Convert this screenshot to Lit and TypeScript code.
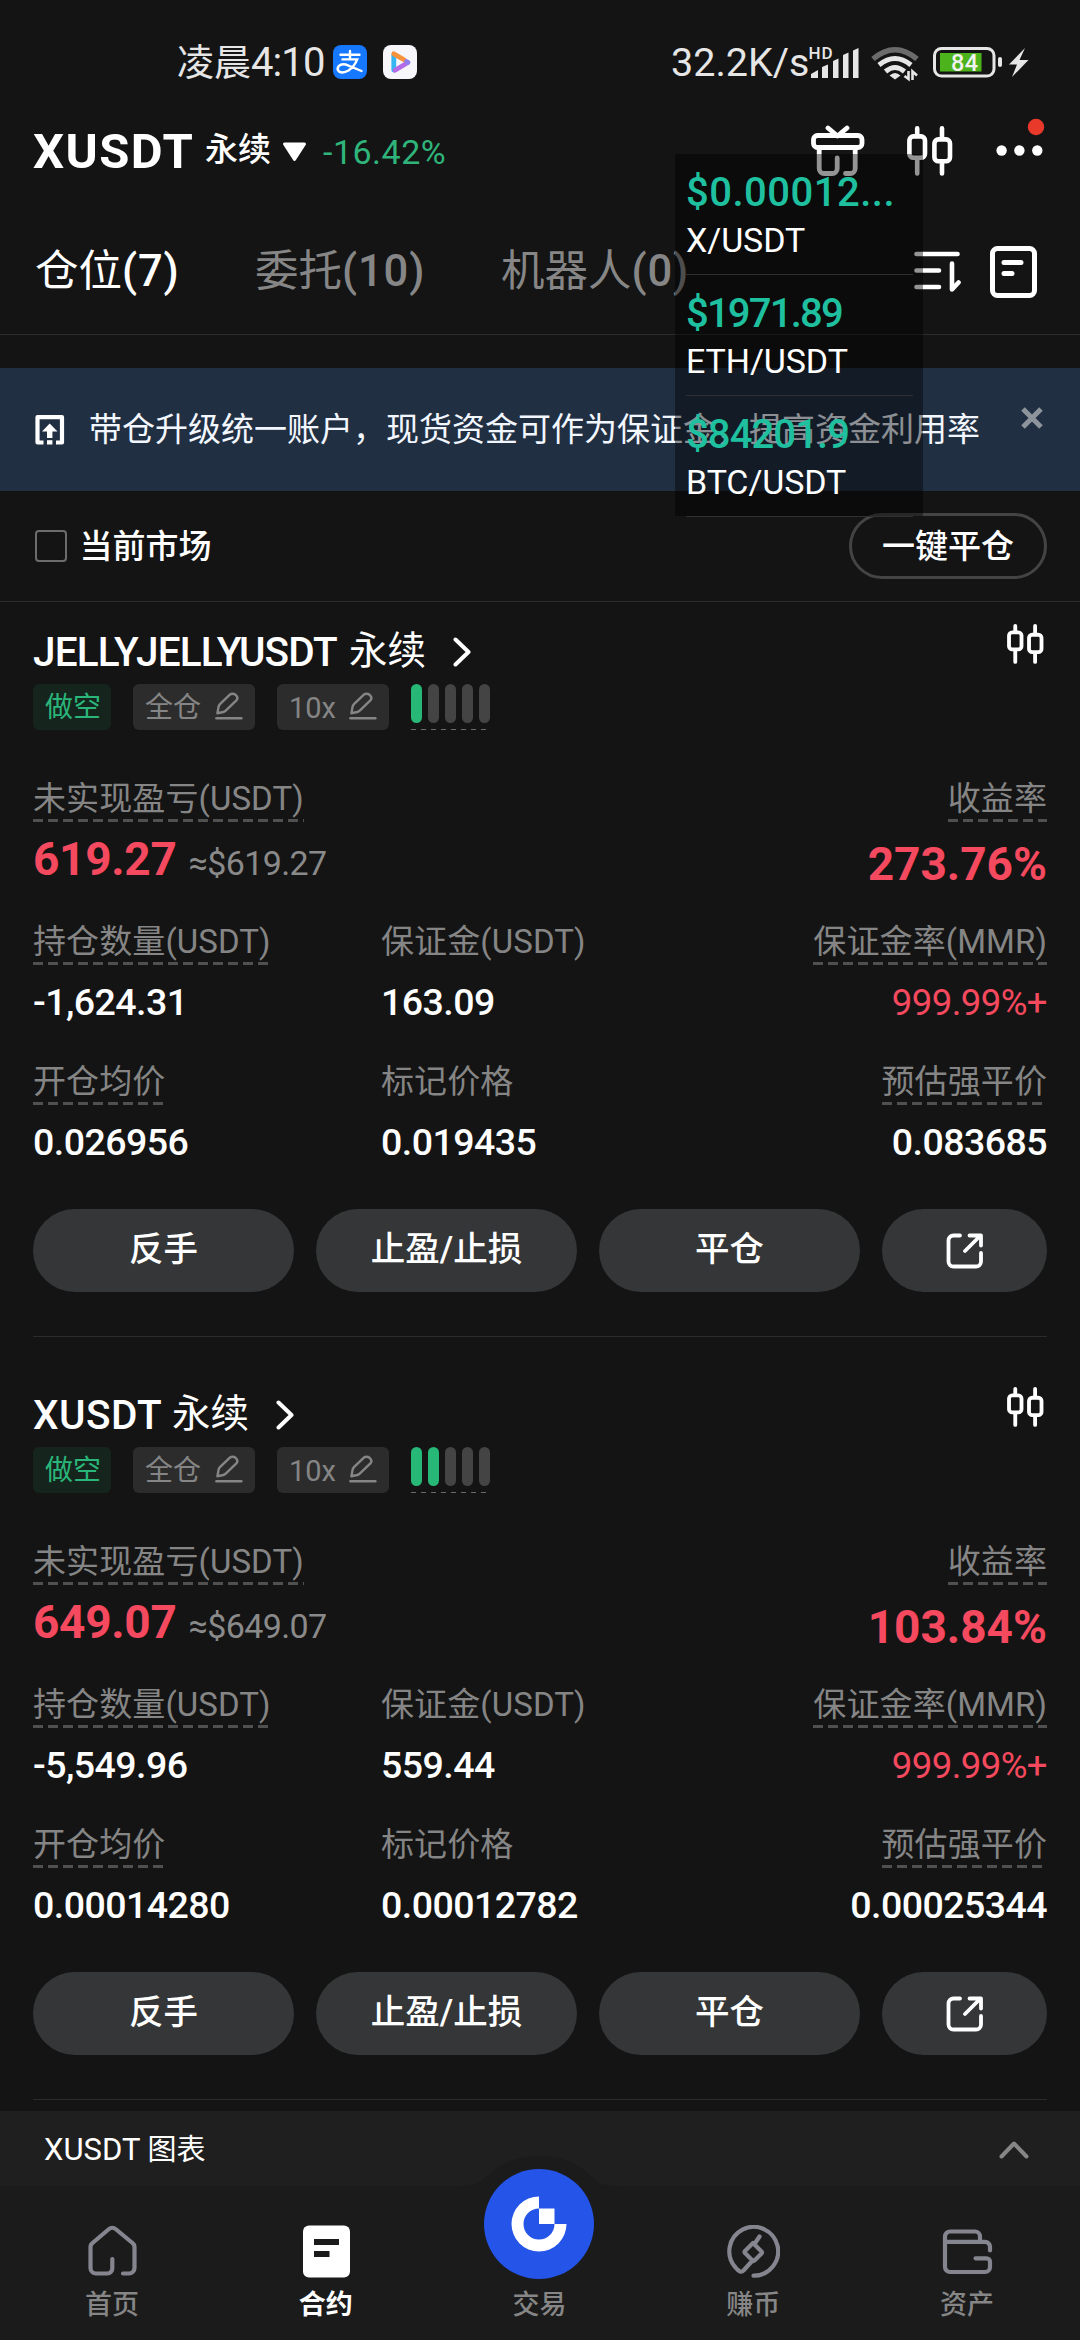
import { LitElement, html, svg, css } from "lit";
import { customElement, property } from "lit/decorators.js";

interface Position {
  symbol: string;
  symbolClass: string;
  risk: number;
  pnl: string;
  roi: string;
  size: string;
  margin: string;
  entry: string;
  mark: string;
  liquidation: string;
}

const POSITIONS: Position[] = [
  {
    symbol: "JELLYJELLYUSDT",
    symbolClass: "long",
    risk: 1,
    pnl: "619.27",
    roi: "273.76%",
    size: "-1,624.31",
    margin: "163.09",
    entry: "0.026956",
    mark: "0.019435",
    liquidation: "0.083685",
  },
  {
    symbol: "XUSDT",
    symbolClass: "short",
    risk: 2,
    pnl: "649.07",
    roi: "103.84%",
    size: "-5,549.96",
    margin: "559.44",
    entry: "0.00014280",
    mark: "0.00012782",
    liquidation: "0.00025344",
  },
];

const QUOTES = [
  { price: "$0.00012...", pair: "X/USDT", cls: "wide" },
  { price: "$1971.89", pair: "ETH/USDT", cls: "tight" },
  { price: "$84201.9", pair: "BTC/USDT", cls: "snug" },
];

const candles = (w: number, h: number, sw: number) => html`
  <svg width=${w} height=${h} viewBox="0 0 46 50" fill="none" stroke="#fff" stroke-width=${sw} stroke-linecap="round">
    <rect x="2.4" y="10.4" width="15.6" height="21.4" rx="4" />
    <path d="M10.2 2.4V9M10.2 33V47.4" />
    <rect x="27.4" y="13.4" width="15.6" height="21.8" rx="4" />
    <path d="M35 2.4V12M35 36V47.4" />
  </svg>
`;

const pencil = html`
  <svg width="28" height="28" viewBox="0 0 28 28" fill="none" stroke="#858585" stroke-width="2.4" stroke-linecap="round" stroke-linejoin="round">
    <path d="M2.4 21.2L3.6 14.6Q4 13 5.2 11.8L14.6 2.8Q17.6 .6 20.6 2.8Q23.8 5.6 21.4 8.4L11 18.4Q9.8 19.6 8.2 20Z" />
    <path d="M1.4 26.3H26.4" />
  </svg>
`;

const base = css`
  :host {
    display: block;
    font-family: Roboto, "Noto Sans CJK SC", sans-serif;
  }
  * {
    box-sizing: border-box;
  }
  svg {
    display: block;
    flex: none;
  }
`;

@customElement("status-bar")
class StatusBar extends LitElement {
  static styles = [
    base,
    css`
      .bar {
        height: 124px;
        display: flex;
        align-items: center;
        color: #e6e6e6;
        padding-left: 177px;
      }
      .time {
        width: 156px;
        font-size: 37px;
        line-height: 50px;
        padding-top: 2px;
        white-space: nowrap;
      }
      .time b {
        font-weight: 400;
        font-size: 40px;
        letter-spacing: -0.9px;
      }
      .app {
        margin-right: 16px;
      }
      .speed {
        margin-left: 254px;
        width: 136px;
        font-size: 39.5px;
        line-height: 50px;
        padding-top: 2px;
        white-space: nowrap;
      }
    `,
  ];
  render() {
    return html`
      <div class="bar">
        <div class="time">凌晨<b>4:10</b></div>
        <svg class="app" width="34" height="34" viewBox="0 0 34 34">
          <rect width="34" height="34" rx="8" fill="#1677ff" />
          <g fill="none" stroke="#fff" stroke-width="2.4" stroke-linecap="round">
            <path d="M7.500 9.800H26.500M17 6V14.200M9.500 14.400H24.200Q21.500 21.500 15.500 25.500Q10 28.800 6.200 26.600Q3.400 24.200 5.600 21.200Q9.200 17.800 15.500 20.600L28.500 26" />
          </g>
        </svg>
        <svg width="34" height="34" viewBox="0 0 34 34">
          <rect width="34" height="34" rx="8" fill="#f7f6fa" />
          <g fill="none" stroke-linecap="round" stroke-width="4.800">
            <path d="M10.800 10V25" stroke="#35b6f2" />
            <path d="M12 25.200L24.500 17.800" stroke="#b36be8" />
            <path d="M10.800 8.800L21.500 15" stroke="#f7923c" />
            <path d="M23.500 16.600L25 17.400" stroke="#8f7df0" />
          </g>
        </svg>
        <div class="speed">32.2K/s</div>
        <svg width="224" height="40" viewBox="807 42 224 40">
          <text x="808.5" y="58.6" fill="#e6e6e6" font-size="17" font-weight="500" font-family="Roboto" textLength="24">HD</text>
          <g fill="#e6e6e6">
            <path d="M811 78V74L818 70V78ZM822 78V67L828 64.5V78ZM833 78V61L838.5 58.5V78ZM843 78V55L848.5 52.5V78ZM853 78V50.5L858.5 48V78Z" />
          </g>
          <g fill="none" stroke-width="5">
            <path d="M873 59Q895 40.5 917 59" stroke="#6b6b6b" stroke-width="5.5" />
            <path d="M879 65Q895 52 911 65" stroke="#e6e6e6" />
            <path d="M885.5 71.5Q895 63.5 904.500 71.500" stroke="#e6e6e6" />
          </g>
          <path d="M889.500 75.500Q895 70.500 900.500 75.500L895 79.500Z" fill="#e6e6e6" />
          <path d="M908.500 71V79L904.500 76M912.500 80V71.500L917 75.500" stroke="#e6e6e6" stroke-width="2.600" fill="none" />
          <rect x="934.500" y="48.500" width="59.500" height="27.500" rx="7" fill="none" stroke="#e6e6e6" stroke-width="3" />
          <rect x="940" y="53" width="41.500" height="18.500" fill="#4cb31c" />
          <rect x="998" y="57" width="4" height="10" rx="2" fill="#e6e6e6" />
          <text x="951" y="71" fill="#f2f2f2" font-size="23.500" font-weight="500" font-family="Roboto" textLength="27">84</text>
          <path d="M1025 48L1009 64.500H1017L1012 77L1028.500 60H1019.500Z" fill="#e6e6e6" />
        </svg>
      </div>
    `;
  }
}

@customElement("market-header")
class MarketHeader extends LitElement {
  static styles = [
    base,
    css`
      .head {
        height: 56px;
        display: flex;
        align-items: center;
        padding-left: 33px;
        color: #fff;
        white-space: nowrap;
      }
      .name {
        width: 172px;
        font-size: 49px;
        font-weight: 700;
        letter-spacing: 1.4px;
        line-height: 56px;
      }
      .kind {
        width: 77px;
        font-size: 33px;
        font-weight: 500;
        line-height: 48px;
        padding-bottom: 5px;
      }
      .change {
        margin-left: 16px;
        width: 488px;
        font-size: 34px;
        color: #2fb57b;
        letter-spacing: 0.5px;
      }
      .gift {
        margin-top: -2px;
      }
      .candles {
        margin: -3px 0 0 42px;
      }
      .more {
        margin-left: 43px;
        overflow: visible;
      }
      .tabs {
        height: 155px;
        padding: 30px 0 0 35px;
        border-bottom: 1px solid #2c2c2c;
        display: flex;
        align-items: center;
        font-size: 43.5px;
        line-height: 60px;
        color: #868686;
        white-space: nowrap;
      }
      .tab {
        width: 220px;
      }
      b {
        font-weight: 500;
        letter-spacing: 0.9px;
      }
      .active {
        color: #fff;
      }
      .bots {
        width: 413px;
        margin-left: 26px;
      }
      .list {
        margin-left: 29px;
      }
    `,
  ];
  render() {
    return html`
      <div class="head">
        <div class="name">XUSDT</div>
        <div class="kind">永续</div>
        <svg width="25" height="20" viewBox="0 0 25 20"><path d="M2.500 2H22.500L12.500 17.500Z" fill="#fff" stroke="#fff" stroke-width="3" stroke-linejoin="round" /></svg>
        <div class="change">-16.42%</div>
        <svg class="gift" width="54" height="52" viewBox="0 0 54 52" fill="none" stroke="#fff" stroke-width="4.800" stroke-linecap="round" stroke-linejoin="round">
          <path d="M17 3L26.500 11L36 3" />
          <rect x="2.500" y="10.500" width="48.500" height="12" rx="4" />
          <path d="M8.200 23V43.500a5 5 0 0 0 5 5H21.200a5 5 0 0 0 5-5V33M34.500 48.500H39.200a5 5 0 0 0 5-5V23" />
        </svg>
        <div class="candles">${candles(46, 50, 4.6)}</div>
        <svg class="more" width="52" height="56" viewBox="995 124 52 56">
          <circle cx="1000.600" cy="150.500" r="5.200" fill="#fff" />
          <circle cx="1018.400" cy="150.500" r="5.200" fill="#fff" />
          <circle cx="1036.300" cy="150.500" r="5.200" fill="#fff" />
          <circle cx="1035" cy="127" r="8.200" fill="#e8392b" />
        </svg>
      </div>
      <div class="tabs">
        <div class="tab active">仓位<b>(7)</b></div>
        <div class="tab">委托<b>(10)</b></div>
        <div class="bots">机器人<b>(0)</b></div>
        <svg width="47" height="42" viewBox="0 0 47 42" fill="none" stroke="#fff" stroke-width="4.600" stroke-linecap="round" stroke-linejoin="round">
          <path d="M2.500 3H43.500M2.500 19.500H25M2.500 36H25M38 12.500V38.500L44.500 31.500" />
        </svg>
        <svg class="list" width="48" height="52" viewBox="0 0 48 52" fill="none" stroke="#fff" stroke-width="5" stroke-linecap="round">
          <rect x="2.500" y="2.500" width="42" height="47" rx="5" />
          <path d="M14 16.500H31M14 27.500H22" />
        </svg>
      </div>
    `;
  }
}

@customElement("upgrade-banner")
class UpgradeBanner extends LitElement {
  static styles = [
    base,
    css`
      .banner {
        margin-top: 33px;
        height: 123px;
        background: #212f42;
        display: flex;
        align-items: center;
        padding-left: 35px;
        color: #f2f7ff;
      }
      .text {
        margin-left: 24px;
        width: 932px;
        font-size: 33px;
        font-weight: 400;
        line-height: 48px;
        white-space: nowrap;
      }
      .close {
        margin-top: -24px;
      }
      .filter {
        height: 111px;
        padding: 2px 33px 0 35px;
        border-bottom: 1px solid #2c2c2c;
        display: flex;
        align-items: center;
        color: #fff;
        font-size: 33px;
        line-height: 48px;
        font-weight: 500;
      }
      .box {
        width: 32px;
        height: 32px;
        border: 2px solid #6c6c6c;
        border-radius: 4px;
        margin-top: -2px;
      }
      .current {
        margin-left: 12.5px;
        flex: 1;
      }
      .closeall {
        width: 198px;
        height: 66px;
        margin-top: -2px;
        padding-top: 2px;
        border: 3px solid #444;
        border-radius: 33px;
        display: flex;
        align-items: center;
        justify-content: center;
      }
    `,
  ];
  render() {
    return html`
      <div class="banner">
        <svg width="30" height="30" viewBox="0 0 30 30">
          <path d="M8.500 27.500H2.500V2.200H27V27.500H21" fill="none" stroke="#fff" stroke-width="4.200" stroke-linejoin="round" />
          <path d="M14.700 8.500L22.500 16.500H17.400V23H12V16.500H7Z" fill="#fff" />
          <path d="M12 25.200H17.400V29.500H12Z" fill="#fff" />
        </svg>
        <div class="text">带仓升级统一账户，现货资金可作为保证金，提高资金利用率</div>
        <svg class="close" width="22" height="22" viewBox="0 0 22 22"><path d="M2 2L20 20M20 2L2 20" stroke="#8d949c" stroke-width="5" /></svg>
      </div>
      <div class="filter">
        <div class="box"></div>
        <div class="current">当前市场</div>
        <div class="closeall">一键平仓</div>
      </div>
    `;
  }
}

@customElement("position-card")
class PositionCard extends LitElement {
  @property({ attribute: false }) position!: Position;

  static styles = [
    base,
    css`
      .card {
        height: 735px;
        margin: 0 33px;
        padding-top: 21px;
        border-bottom: 1px solid #2c2c2c;
        color: #fff;
        white-space: nowrap;
      }
      .title {
        height: 61px;
        display: flex;
        align-items: flex-start;
        font-size: 40.5px;
        line-height: 58px;
        font-weight: 500;
      }
      .long {
        width: 316px;
        letter-spacing: -0.8px;
      }
      .short {
        width: 139px;
        letter-spacing: 0.5px;
      }
      .kind {
        width: 104px;
        font-size: 38.5px;
        font-weight: 400;
        line-height: 56px;
      }
      .arrow {
        flex: 1;
        padding-top: 14px;
      }
      .chart {
        padding: 1px 3px 0 0;
      }
      .tags {
        display: flex;
        height: 46px;
        gap: 22px;
        font-size: 28px;
        line-height: 48px;
        color: #858585;
      }
      .tag {
        height: 46px;
        background: #2c2c2c;
        border-radius: 6px;
        padding: 0 12px;
        display: flex;
        justify-content: space-between;
      }
      .tag svg {
        margin-top: 8px;
      }
      .side {
        width: 78px;
        padding: 0 10px 0 12px;
        background: #15241c;
        color: #2ab57a;
      }
      .mode {
        width: 122px;
      }
      .lever {
        width: 112px;
      }
      .lever span {
        font-size: 29px;
      }
      .risk {
        width: 79px;
        height: 46px;
        display: flex;
        justify-content: space-between;
        align-items: flex-start;
        background: repeating-linear-gradient(90deg, #6a6a6a 0 5px, transparent 5px 10px) 0 45px / 76px 2px no-repeat;
      }
      .bar {
        width: 11px;
        height: 39px;
        border-radius: 6px;
        background: #444;
      }
      .on {
        background: #27b877;
      }
      .row {
        display: grid;
        grid-template-columns: 348px 349px 1fr;
      }
      .first {
        margin-top: 48px;
        margin-bottom: 39px;
      }
      .second {
        margin-bottom: 36px;
      }
      .cell {
        display: flex;
        flex-direction: column;
        align-items: flex-start;
      }
      .end {
        align-items: flex-end;
      }
      .label {
        height: 44px;
        line-height: 41px;
        font-size: 33px;
        letter-spacing: 0.1px;
        color: #858585;
        margin-bottom: 15px;
      }
      .dash {
        background: repeating-linear-gradient(90deg, #505050 0 10px, transparent 10px 15px) 0 100% / 100% 3px no-repeat;
      }
      .value {
        font-size: 37.5px;
        line-height: 45px;
        height: 45px;
        font-weight: 500;
        letter-spacing: -0.55px;
      }
      .red {
        color: #f4495e;
      }
      .thin {
        font-weight: 400;
        font-size: 36.5px;
      }
      .big {
        font-size: 46px;
        font-weight: 700;
        letter-spacing: -0.3px;
      }
      .approx {
        font-size: 34px;
        font-weight: 400;
        color: #8a8a8a;
        margin-left: 1px;
        letter-spacing: -0.6px;
      }
      .roi {
        margin-top: 5px;
        height: 40px;
        letter-spacing: 0;
      }
      .actions {
        margin-top: 44px;
        display: grid;
        grid-template-columns: 261px 261px 261px 165px;
        gap: 22px;
      }
      .btn {
        height: 83px;
        border-radius: 42px;
        background: #343637;
        display: flex;
        align-items: center;
        justify-content: center;
        font-size: 34.5px;
        line-height: 48px;
        font-weight: 500;
        padding-bottom: 3px;
      }
      .share {
        padding: 0;
      }
    `,
  ];

  private cell(label: string, value: string, opts: { dash?: boolean; end?: boolean; cls?: string } = {}) {
    return html`
      <div class="cell ${opts.end ? "end" : ""}">
        <div class="label ${opts.dash ? "dash" : ""}">${label}</div>
        <div class="value ${opts.cls ?? ""}">${value}</div>
      </div>
    `;
  }

  render() {
    const p = this.position;
    return html`
      <div class="card">
        <div class="title">
          <div class=${p.symbolClass}>${p.symbol}</div>
          <div class="kind">永续</div>
          <div class="arrow">
            <svg width="20" height="30" viewBox="0 0 20 30"><path d="M2.500 2.500L15.500 15L2.500 27.500" fill="none" stroke="#fff" stroke-width="4" stroke-linecap="round" stroke-linejoin="round" /></svg>
          </div>
          <div class="chart">${candles(37, 40, 4.8)}</div>
        </div>
        <div class="tags">
          <div class="tag side"><span>做空</span></div>
          <div class="tag mode"><span>全仓</span>${pencil}</div>
          <div class="tag lever"><span>10x</span>${pencil}</div>
          <div class="risk">${[1, 2, 3, 4, 5].map((n) => html`<div class="bar ${n <= p.risk ? "on" : ""}"></div>`)}</div>
        </div>
        <div class="row first">
          <div class="cell">
            <div class="label dash">未实现盈亏(USDT)</div>
            <div class="value big red">${p.pnl} <span class="approx">≈$${p.pnl}</span></div>
          </div>
          <div></div>
          ${this.cell("收益率", p.roi, { dash: true, end: true, cls: "big red roi" })}
        </div>
        <div class="row second">
          ${this.cell("持仓数量(USDT)", p.size, { dash: true })}
          ${this.cell("保证金(USDT)", p.margin)}
          ${this.cell("保证金率(MMR)", "999.99%+", { dash: true, end: true, cls: "red thin" })}
        </div>
        <div class="row">
          ${this.cell("开仓均价", p.entry, { dash: true })}
          ${this.cell("标记价格", p.mark)}
          ${this.cell("预估强平价", p.liquidation, { dash: true, end: true })}
        </div>
        <div class="actions">
          <div class="btn">反手</div>
          <div class="btn">止盈/止损</div>
          <div class="btn">平仓</div>
          <div class="btn share">
            <svg width="38" height="36" viewBox="0 0 38 36" fill="none" stroke="#fff" stroke-width="3.800" stroke-linecap="round" stroke-linejoin="round">
              <path d="M14 2.500H7.500a5 5 0 0 0-5 5V28.500a5 5 0 0 0 5 5H30a5 5 0 0 0 5-5V20M19 18L34.500 2.500M23.500 2.500H35V12.500" />
            </svg>
          </div>
        </div>
      </div>
    `;
  }
}

@customElement("chart-drawer")
class ChartDrawer extends LitElement {
  static styles = [
    base,
    css`
      .drawer {
        margin-top: 11px;
        height: 75px;
        background: #1f1f1f;
        display: flex;
        align-items: center;
        justify-content: space-between;
        padding: 3px 51px 0 44px;
        color: #fff;
        font-size: 29px;
        line-height: 40px;
      }
      b {
        font-weight: 400;
        font-size: 31px;
      }
    `,
  ];
  render() {
    return html`
      <div class="drawer">
        <div><b>XUSDT</b> 图表</div>
        <svg width="30" height="18" viewBox="0 0 30 18"><path d="M2.500 15.500L15 2.500L27.500 15.500" fill="none" stroke="#868686" stroke-width="4" stroke-linecap="round" stroke-linejoin="round" /></svg>
      </div>
    `;
  }
}

const NAV = [
  {
    label: "首页",
    icon: svg`<path transform="translate(3 0)" d="M24.300 34V43.500a5 5 0 0 1-5 5H8a5.500 5.500 0 0 1-5.500-5.500V22a5 5 0 0 1 2-4L21 4a5 5 0 0 1 6.600 0L44.500 18a5 5 0 0 1 2 4V43a5.500 5.500 0 0 1-5.500 5.500H35" />`,
  },
  {
    label: "合约",
    active: true,
    icon: svg`<rect x="4" y="0.500" width="47" height="52" rx="6" fill="#fff" stroke="none" /><path d="M15 14H40V20H15ZM15 26H30.500V32H15Z" fill="#1b1b1b" stroke="none" />`,
  },
  { label: "交易", fab: true, icon: null },
  {
    label: "赚币",
    icon: svg`<path d="M27.500 50.700A24.400 24.400 0 1 0 9.500 42.500Q14.500 49 17.500 45.500L26.500 35.500M29.500 17.500L33.500 11.500M27 18L35.500 26.500a1.500 1.500 0 0 1 0 2L28.500 35.500a1.500 1.500 0 0 1-2 0L19 28a1.500 1.500 0 0 1 0-2Z" />`,
  },
  {
    label: "资产",
    icon: svg`<path transform="translate(2.500 4)" d="M2.500 12.800V7.500a5 5 0 0 1 5-5H32.500a5 5 0 0 1 5 5V12.800M2.500 12.800H42.500a5 5 0 0 1 5 5V21.500M33 29.300H44a3.500 3.500 0 0 1 3.500 3.500V38a5 5 0 0 1-5 5H7.500a5 5 0 0 1-5-5V12.800" />`,
  },
];

@customElement("bottom-nav")
class BottomNav extends LitElement {
  static styles = [
    base,
    css`
      .nav {
        height: 154px;
        background: #1b1b1b;
        padding: 39px 6px 0 5px;
        display: grid;
        grid-template-columns: repeat(5, 1fr);
      }
      .item {
        display: flex;
        flex-direction: column;
        align-items: center;
        font-size: 27px;
        line-height: 34px;
        font-weight: 500;
        color: #868686;
      }
      .icon {
        height: 53px;
        margin-bottom: 10px;
      }
      .active {
        color: #fff;
        font-weight: 700;
      }
      .fab {
        margin-top: -69px;
        margin-bottom: 2px;
        height: 130px;
      }
    `,
  ];
  render() {
    return html`
      <div class="nav">
        ${NAV.map((n) =>
          n.fab
            ? html`<div class="item">
                <svg class="fab" width="160" height="130" viewBox="-80 -68 160 130">
                  <path d="M-80 -37.500C-66 -37.500 -60 -41 -53 -47C-40 -60 -24 -68 0 -68S40 -60 53 -47C60 -41 66 -37.500 80 -37.500Z" fill="#1b1b1b" />
                  <circle r="55" fill="#2454e8" />
                  <path d="M0 -27.500A27.500 27.500 0 1 0 27.500 0H15.500A15.500 15.500 0 1 1 0 -15.500Z" fill="#fff" />
                  <path d="M0 -15.500H15.500V0H0Z" fill="#fff" />
                </svg>
                ${n.label}
              </div>`
            : html`<div class="item ${n.active ? "active" : ""}">
                <svg class="icon" width="54" height="53" viewBox="0 0 54 53" fill="none" stroke="#85858f" stroke-width="4.200" stroke-linecap="round" stroke-linejoin="round">${n.icon}</svg>
                ${n.label}
              </div>`
        )}
      </div>
    `;
  }
}

@customElement("price-overlay")
class PriceOverlay extends LitElement {
  static styles = [
    base,
    css`
      .panel {
        width: 248px;
        height: 362px;
        background: rgba(0, 0, 0, 0.42);
        padding: 0 10px 0 11px;
        white-space: nowrap;
      }
      .quote {
        height: 121px;
        border-bottom: 1px solid #2e3033;
        padding-top: 14px;
      }
      .price {
        font-size: 40px;
        line-height: 50px;
        color: #1fc09f;
        font-weight: 500;
      }
      .wide {
        letter-spacing: 0.5px;
      }
      .tight {
        letter-spacing: -1.8px;
      }
      .snug {
        letter-spacing: -0.9px;
      }
      .pair {
        font-size: 34px;
        line-height: 44px;
        color: #fff;
        letter-spacing: -0.1px;
      }
    `,
  ];
  render() {
    return html`
      <div class="panel">
        ${QUOTES.map((q) => html`<div class="quote"><div class="price ${q.cls}">${q.price}</div><div class="pair">${q.pair}</div></div>`)}
      </div>
    `;
  }
}

@customElement("app-root")
class AppRoot extends LitElement {
  static styles = [
    base,
    css`
      .screen {
        position: relative;
        width: 1080px;
        height: 2340px;
        overflow: hidden;
        background: #141414;
      }
      .positions {
        display: flex;
        flex-direction: column;
        gap: 28px;
      }
      .overlay {
        position: absolute;
        left: 675px;
        top: 154px;
      }
    `,
  ];
  render() {
    return html`
      <div class="screen">
        <status-bar></status-bar>
        <market-header></market-header>
        <upgrade-banner></upgrade-banner>
        <div class="positions">${POSITIONS.map((p) => html`<position-card .position=${p}></position-card>`)}</div>
        <chart-drawer></chart-drawer>
        <bottom-nav></bottom-nav>
        <price-overlay class="overlay"></price-overlay>
      </div>
    `;
  }
}
